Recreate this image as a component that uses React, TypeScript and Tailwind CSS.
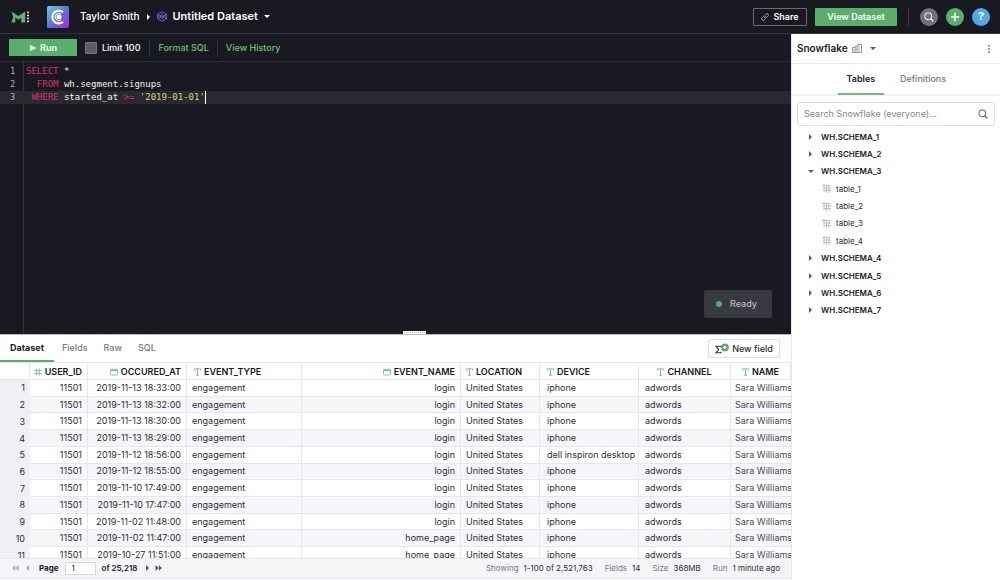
import { useState } from "react";
import type { ReactNode } from "react";
import clsx from "clsx";

const ROWS = [
  ["2019-11-13 18:33:00", "login", "iphone"],
  ["2019-11-13 18:32:00", "login", "iphone"],
  ["2019-11-13 18:30:00", "login", "iphone"],
  ["2019-11-13 18:29:00", "login", "iphone"],
  ["2019-11-12 18:56:00", "login", "dell inspiron desktop"],
  ["2019-11-12 18:55:00", "login", "iphone"],
  ["2019-11-10 17:49:00", "login", "iphone"],
  ["2019-11-10 17:47:00", "login", "iphone"],
  ["2019-11-02 11:48:00", "login", "iphone"],
  ["2019-11-02 11:47:00", "home_page", "iphone"],
  ["2019-10-27 11:51:00", "home_page", "iphone"],
];

type FieldType = "number" | "date" | "text";

const COLUMNS: { name: string; type: FieldType; align: string; width: string }[] = [
  { name: "USER_ID", type: "number", align: "justify-end pr-[5px]", width: "w-[58px]" },
  { name: "OCCURED_AT", type: "date", align: "justify-end pr-[5px]", width: "w-[99px]" },
  { name: "EVENT_TYPE", type: "text", align: "justify-start pl-[7px]", width: "w-[115px]" },
  { name: "EVENT_NAME", type: "date", align: "justify-end pr-[5px]", width: "w-[159px]" },
  { name: "LOCATION", type: "text", align: "justify-start pl-[5px]", width: "w-[79px]" },
  { name: "DEVICE", type: "text", align: "justify-start pl-[7px]", width: "w-[99px]" },
  { name: "CHANNEL", type: "text", align: "justify-center", width: "w-[92px]" },
  { name: "NAME", type: "text", align: "justify-center", width: "w-auto" },
];

const SCHEMAS = [1, 2, 3, 4, 5, 6, 7];
const TABLES = ["table_1", "table_2", "table_3", "table_4"];

/* ---------- icons ---------- */

function ModeLogo() {
  return (
    <svg width="20" height="12" viewBox="0 0 20 12" aria-hidden="true">
      <path d="M0.5 0.5 7.3 5 14.2 0.5V11.5H10.2V6.6L7.3 8.8 4.3 6.6V11.5H0.3L2.2 6z" fill="#5cb671" />
      <g fill="#d9d9de">
        <rect x="16" y="0.6" width="2" height="1.6" />
        <rect x="16" y="3.6" width="2" height="1.6" />
        <rect x="16" y="6.6" width="2" height="1.6" />
        <rect x="16" y="9.6" width="2" height="1.6" />
      </g>
    </svg>
  );
}

function WorkspaceLogo() {
  return (
    <svg width="22" height="22" viewBox="0 0 22 22" aria-hidden="true">
      <defs>
        <linearGradient id="workspace" x1="0" y1="0" x2="1" y2="1">
          <stop offset="0" stopColor="#5fd0e0" />
          <stop offset="0.5" stopColor="#6470dd" />
          <stop offset="1" stopColor="#a02bd0" />
        </linearGradient>
      </defs>
      <rect width="22" height="22" rx="1.5" fill="url(#workspace)" />
      <path d="M16 6.2A6.4 6.4 0 1 0 16 15.8" fill="none" stroke="#fff" strokeWidth="2.1" />
      <path d="M14 8.2A3.6 3.6 0 1 0 14 13.8" fill="none" stroke="#fff" strokeWidth="1" />
      <circle cx="12" cy="11" r="2.5" fill="#fff" />
    </svg>
  );
}

function DatasetIcon() {
  return (
    <svg width="10" height="11" viewBox="0 0 10 11" fill="none" stroke="#7c6fd6" aria-hidden="true">
      <path d="M5 0.8 9.3 3.1V7.9L5 10.2 0.7 7.9V3.1z" strokeWidth="0.9" />
      <path d="M0.7 3.4 5 6 9.3 3.4M0.7 7.6 5 5 9.3 7.6" strokeWidth="0.8" />
      <path d="M5 3.2 7.4 5.5 5 7.8 2.6 5.5z" strokeWidth="0.8" />
    </svg>
  );
}

function Triangle({ dir, className }: { dir: "right" | "left" | "down"; className?: string }) {
  const d = { right: "M1 0 4 3 1 6z", left: "M4 0 1 3 4 6z", down: "M0 1 6 1 3 4z" }[dir];
  const down = dir === "down";
  return (
    <svg
      width={down ? 6 : 5}
      height={down ? 5 : 6}
      viewBox={down ? "0 0 6 5" : "0 0 5 6"}
      className={clsx("shrink-0", className)}
      fill="currentColor"
      aria-hidden="true"
    >
      <path d={d} />
    </svg>
  );
}

function DoubleTriangle({ dir }: { dir: "right" | "left" }) {
  return (
    <svg width="7" height="6" viewBox="0 0 7 6" fill="currentColor" aria-hidden="true">
      <path d={dir === "right" ? "M0.5 0 3.5 3 0.5 6zM3.8 0 6.8 3 3.8 6z" : "M3.2 0 0.2 3 3.2 6zM6.5 0 3.5 3 6.5 6z"} />
    </svg>
  );
}

function LinkIcon() {
  return (
    <svg width="8" height="8" viewBox="0 0 8 8" fill="none" stroke="#b4b4bb" strokeWidth="0.8" strokeLinecap="round" aria-hidden="true">
      <path d="M3.4 4.6a1.5 1.5 0 0 0 2.1 0L7.1 3A1.5 1.5 0 0 0 5 .9L4 1.9" />
      <path d="M4.6 3.4a1.5 1.5 0 0 0-2.1 0L.9 5A1.5 1.5 0 0 0 3 7.1l1-1" />
    </svg>
  );
}

function SearchIcon({ className }: { className?: string }) {
  return (
    <svg width="10" height="10" viewBox="0 0 10 10" fill="none" stroke="currentColor" className={className} aria-hidden="true">
      <circle cx="4.3" cy="4.3" r="3.5" />
      <path d="M6.8 6.8 9.4 9.4" strokeWidth="1.3" />
    </svg>
  );
}

function BuildingIcon() {
  return (
    <svg width="10" height="9" viewBox="0 0 10 9" fill="none" stroke="#7d7d85" strokeWidth="0.8" aria-hidden="true">
      <path d="M0.5 8.5V3.5H3.2V8.5M3.2 3.5V2H5.8M5.8 8.5V0.5H9.5V8.5M0.5 8.5H9.5" />
      <path d="M7.6 2V7.4M4.5 3.6V7.4M1.9 5V7.4" strokeDasharray="0.9 0.7" />
    </svg>
  );
}

function TableIcon() {
  return (
    <svg width="9" height="9" viewBox="0 0 9 9" fill="none" stroke="#a9a9b1" strokeWidth="0.7" aria-hidden="true">
      <path d="M0 1.5H8M1.5 4H9M1.5 6.5H9M2 0V8M4.5 1.5V9M7 1.5V9" />
    </svg>
  );
}

function FieldIcon({ type }: { type: FieldType }) {
  if (type === "number") {
    return (
      <svg width="8" height="8" viewBox="0 0 8 8" fill="none" stroke="#74c386" strokeWidth="0.9" aria-hidden="true">
        <path d="M0.2 2.6H7.8M0.2 5.4H7.8M2.6 0.4V7.6M5.4 0.4V7.6" />
      </svg>
    );
  }
  if (type === "date") {
    return (
      <svg width="8" height="8" viewBox="0 0 8 8" fill="none" stroke="#6fb5d8" strokeWidth="0.8" aria-hidden="true">
        <rect x="0.5" y="1.7" width="7" height="5.4" rx="0.5" />
        <path d="M0.5 2.4H7.5" strokeWidth="1.2" />
        <path d="M2.2 0.4V2M5.8 0.4V2" />
      </svg>
    );
  }
  return (
    <svg width="7" height="8" viewBox="0 0 7 8" fill="none" stroke="#68b1dc" strokeWidth="0.9" aria-hidden="true">
      <path d="M0.5 2.6V0.9H6.5V2.6M3.5 0.9V7.2M2 7.2H5" />
    </svg>
  );
}

function NewFieldIcon() {
  return (
    <svg width="14" height="11" viewBox="0 0 14 11" aria-hidden="true">
      <path d="M6 4.2V3.2H0.9L3.7 6.5 0.9 9.8H6V8.8" fill="none" stroke="#33333b" strokeWidth="1.1" />
      <circle cx="9.9" cy="4.4" r="3.9" fill="#56af68" />
      <path d="M9.9 2.7V6.1M8.2 4.4H11.6" stroke="#fff" strokeWidth="1.3" />
    </svg>
  );
}

/* ---------- top bar ---------- */

function RoundButton({ label, className, children }: { label: string; className: string; children: ReactNode }) {
  return (
    <button aria-label={label} className={clsx("flex size-[18px] items-center justify-center rounded-full text-white", className)}>
      {children}
    </button>
  );
}

function TopBar() {
  return (
    <header className="flex h-[34px] shrink-0 items-center border-b border-[#33333c] px-[10px] text-white">
      <a href="#home" aria-label="Home" className="ml-[1px]"><ModeLogo /></a>
      <a href="#workspace" aria-label="Workspace" className="ml-4"><WorkspaceLogo /></a>
      <a href="#taylor" className="ml-[11px] text-[10px] font-medium">Taylor Smith</a>
      <Triangle dir="right" className="mx-[6px]" />
      <button className="flex items-center gap-[6px] text-[11px] font-semibold">
        <DatasetIcon />
        Untitled Dataset
        <Triangle dir="down" />
      </button>
      <div className="ml-auto flex items-center">
        <button className="flex h-[18px] w-[54px] items-center justify-center gap-1 rounded-[1px] border border-[#6b6b74] text-[9px] font-semibold">
          <LinkIcon />
          Share
        </button>
        <button className="ml-2 h-[18px] w-[82px] rounded-[1px] bg-[#58af6a] text-[9px] font-semibold">View Dataset</button>
        <div className="ml-[11px] h-[18px] w-px bg-[#3f3f48]" />
        <div className="ml-[11px] flex gap-2">
          <RoundButton label="Search" className="bg-[#71717c]"><SearchIcon /></RoundButton>
          <RoundButton label="Create" className="bg-[#58af6a]">
            <svg width="10" height="10" viewBox="0 0 10 10" stroke="currentColor" strokeWidth="1.5" aria-hidden="true">
              <path d="M5 0.8V9.2M0.8 5H9.2" />
            </svg>
          </RoundButton>
          <RoundButton label="Help" className="bg-[#4fa8e8] text-[11px] font-bold">?</RoundButton>
        </div>
      </div>
    </header>
  );
}

/* ---------- query editor ---------- */

function Toolbar() {
  return (
    <div className="flex h-7 shrink-0 items-center border-b border-[#2d2d36] pl-[9px] text-[9px] font-medium text-[#6cc07e]">
      <button className="flex h-[17px] w-[68px] items-center justify-center gap-[3px] bg-[#58af6a] font-semibold text-white">
        <svg width="8" height="6" viewBox="0 0 8 6" fill="currentColor" aria-hidden="true"><path d="M1 0 7.5 3 1 6z" /></svg>
        Run
      </button>
      <label className="ml-2 flex items-center gap-[5px] text-white">
        <input type="checkbox" className="size-3 appearance-none rounded-[1px] border border-[#76767f] bg-[#5d5d66] checked:bg-[#58af6a]" />
        Limit 100
      </label>
      <div className="ml-[9px] h-[18px] w-px bg-[#33333c]" />
      <button className="ml-2">Format SQL</button>
      <div className="ml-2 h-[18px] w-px bg-[#33333c]" />
      <button className="ml-2">View History</button>
    </div>
  );
}

function CodeLine({ n, active, children }: { n: number; active?: boolean; children: ReactNode }) {
  return (
    <div className={clsx("flex h-[13px] leading-[13px]", active && "bg-[#292931]")}>
      <span className="w-6 shrink-0 pr-[9px] text-right text-[8px] text-[#b6b6bd]">{n}</span>
      <code className="flex pl-[2px] font-['DejaVu_Sans_Mono',monospace]">{children}</code>
    </div>
  );
}

function Editor() {
  return (
    <div className="relative flex min-h-0 flex-1 flex-col">
      <div className="flex-1 bg-[linear-gradient(90deg,transparent_23px,#33333c_23px,#33333c_24px,transparent_24px)] pt-[3px] font-['DejaVu_Sans_Mono',monospace] text-[9px] text-[#f4f4f0]">
        <CodeLine n={1}>
          <span className="whitespace-pre"><span className="text-[#d9306f]">SELECT</span> *</span>
        </CodeLine>
        <CodeLine n={2}>
          <span className="whitespace-pre">{"  "}<span className="text-[#d9306f]">FROM</span> wh.segment.signups</span>
        </CodeLine>
        <CodeLine n={3} active>
          <span className="whitespace-pre">
            {" "}<span className="text-[#d9306f]">WHERE</span> started_at <span className="text-[#d9306f]">{">="}</span>{" "}
            <span className="text-[#dcd374]">'2019-01-01'</span>
          </span>
          <span className="h-[13px] w-px bg-white" />
        </CodeLine>
      </div>
      <div role="status" className="absolute right-[19px] bottom-4 flex h-7 w-[68px] items-center gap-2 rounded-[2px] bg-[#393942] pl-3 text-[9px] font-medium text-[#b9b9c0]">
        <span className="size-[6px] rounded-full bg-[#58af6a]" />
        Ready
      </div>
      <div className="absolute bottom-0 left-[403px] h-[3px] w-[23px] bg-white px-px pt-px">
        <div className="h-px bg-[repeating-linear-gradient(90deg,#b5b5bd_0px,#b5b5bd_1px,#ffffff_1px,#ffffff_2px)]" />
      </div>
    </div>
  );
}

/* ---------- results ---------- */

const TABS = ["Dataset", "Fields", "Raw", "SQL"];

function ResultTabs() {
  const [tab, setTab] = useState("Dataset");
  return (
    <div className="flex h-7 shrink-0 items-center border-b border-[#e6e6ec] pr-[11px]">
      <div role="tablist" className="flex h-full">
        {TABS.map((t) => (
          <button
            key={t}
            role="tab"
            aria-selected={tab === t}
            onClick={() => setTab(t)}
            className={clsx(
              "border-b-2 text-[9px]",
              t === "Dataset" ? "w-[54px]" : "px-2",
              tab === t ? "border-[#58af6a] font-bold text-[#202028]" : "border-transparent font-medium text-[#777781]",
            )}
          >
            {t}
          </button>
        ))}
      </div>
      <button className="ml-auto flex h-[19px] w-[72px] items-center justify-center gap-[3px] rounded-[2px] border border-[#dcdce2] text-[9px] font-medium text-[#2b2b33]">
        <NewFieldIcon />
        New field
      </button>
    </div>
  );
}

function Cell({ className = "px-[5px]", children }: { className?: string; children: ReactNode }) {
  return <td className={clsx("border-r border-b border-[#e6e6ee] p-0 whitespace-nowrap", className)}>{children}</td>;
}

function ResultTable() {
  return (
    <div className="min-h-0 flex-1 overflow-hidden">
      <table className="h-[201px] w-full table-fixed border-separate border-spacing-0 text-[9px] leading-[14px] text-[#2c2c33]">
        <thead>
          <tr className="h-[17px]">
            <th aria-label="Row" className="w-[30px] border-r border-b border-[#e6e6ee] p-0" />
            {COLUMNS.map((c) => (
              <th key={c.name} scope="col" className={clsx("border-r border-b border-[#e6e6ee] p-0 font-semibold text-[#17171c]", c.width)}>
                <div className={clsx("flex items-center gap-[3px] pt-px", c.align)}>
                  <FieldIcon type={c.type} />
                  {c.name}
                </div>
              </th>
            ))}
          </tr>
        </thead>
        <tbody>
          {ROWS.map(([at, event, device], i) => (
            <tr key={at} className="even:bg-[#f6f6f8]">
              <th scope="row" className="bg-[#eff0f4] p-0 pr-[5px] text-right font-normal">{i + 1}</th>
              <Cell className="pr-[5px] text-right">11501</Cell>
              <Cell className="pr-[5px] text-right">{at}</Cell>
              <Cell>engagement</Cell>
              <Cell className="pr-[5px] text-right">{event}</Cell>
              <Cell>United States</Cell>
              <Cell className="pl-[7px]">{device}</Cell>
              <Cell className="pl-[6px]">adwords</Cell>
              <td className="border-b border-[#e6e6ee] p-0 pl-1 whitespace-nowrap text-[#4a4a53]">Sara Williams</td>
            </tr>
          ))}
        </tbody>
      </table>
    </div>
  );
}

function Stat({ label, value }: { label: string; value: string }) {
  return (
    <span className="flex gap-[5px]">
      <span className="text-[#777781]">{label}</span>
      {value}
    </span>
  );
}

function ResultFooter() {
  return (
    <footer className="mb-px flex h-[21px] shrink-0 items-center border-y border-[#e6e6ee] bg-[#f5f5f8] pr-[11px] pb-px pl-3 text-[8px] text-[#2c2c33]">
      <div className="flex items-center text-[#54545e]">
        <button aria-label="First page" disabled className="text-[#a9a9b2]"><DoubleTriangle dir="left" /></button>
        <button aria-label="Previous page" disabled className="ml-[6px] text-[#a9a9b2]"><Triangle dir="left" /></button>
        <label className="ml-[9px] flex items-center gap-[6px] font-bold text-[#202028]">
          Page
          <input defaultValue="1" className="h-[13px] w-[31px] border border-[#d8d8e0] bg-white pl-[6px] font-normal" />
        </label>
        <span className="ml-[6px] font-semibold text-[#202028]">of 25,218</span>
        <button aria-label="Next page" className="ml-2"><Triangle dir="right" /></button>
        <button aria-label="Last page" className="ml-[5px]"><DoubleTriangle dir="right" /></button>
      </div>
      <div className="ml-auto flex gap-3">
        <Stat label="Showing" value="1-100 of 2,521,763" />
        <Stat label="Fields" value="14" />
        <Stat label="Size" value="368MB" />
        <Stat label="Run" value="1 minute ago" />
      </div>
    </footer>
  );
}

/* ---------- schema browser ---------- */

function SchemaBrowser() {
  const [open, setOpen] = useState(3);
  return (
    <aside className="flex w-[209px] shrink-0 flex-col border-l border-[#e6e6ee] bg-white text-[#202028]">
      <div className="flex h-[30px] items-center border-b border-[#e9e9ef] pr-[10px] pl-[5px]">
        <button className="flex items-center gap-1 text-[10px] font-semibold">
          Snowflake
          <BuildingIcon />
          <Triangle dir="down" className="ml-1 text-[#5b5b64]" />
        </button>
        <button aria-label="More" className="ml-auto text-[#6a6a73]">
          <svg width="2" height="8" viewBox="0 0 2 8" fill="currentColor" aria-hidden="true">
            <path d="M0.2 0H1.8V1.6H0.2zM0.2 3.2H1.8V4.8H0.2zM0.2 6.4H1.8V8H0.2z" />
          </svg>
        </button>
      </div>
      <div role="tablist" className="flex h-8 justify-center gap-1 border-b-2 border-[#f1f1f4] pl-1 text-[9px]">
        <button role="tab" aria-selected="true" className="-mb-px w-[46px] border-b-2 border-[#6fbb7f] font-semibold">Tables</button>
        <button role="tab" aria-selected="false" className="px-3 font-medium text-[#777781]">Definitions</button>
      </div>
      <label className="mx-[5px] mt-[6px] flex h-6 items-center rounded-[2px] border border-[#dcdce2] px-[6px] text-[#55555e]">
        <input aria-label="Search Snowflake" placeholder="Search Snowflake (everyone)..." className="min-w-0 flex-1 text-[9px] outline-none placeholder:text-[#85858f]" />
        <SearchIcon />
      </label>
      <ul className="mt-[2px] flex h-[191px] flex-col text-[8px]">
        {SCHEMAS.map((n) => (
          <li key={n} className={clsx("flex flex-col", open === n ? "flex-[5]" : "flex-1")}>
            <button
              aria-expanded={open === n}
              onClick={() => setOpen(open === n ? 0 : n)}
              className="flex flex-1 items-center pl-4 font-semibold"
            >
              <span className="w-[13px] text-[#5b5b64]"><Triangle dir={open === n ? "down" : "right"} /></span>
              WH.SCHEMA_{n}
            </button>
            {open === n &&
              TABLES.map((t) => (
                <a key={t} href={`#${t}`} className="flex flex-1 items-center gap-[5px] pl-[30px] text-[#2c2c33]">
                  <TableIcon />
                  {t}
                </a>
              ))}
          </li>
        ))}
      </ul>
    </aside>
  );
}

export default function App() {
  return (
    <div className="flex h-screen flex-col overflow-hidden bg-[#191921] font-[Inter,sans-serif]">
      <TopBar />
      <div className="flex min-h-0 flex-1">
        <main className="flex min-w-0 flex-1 flex-col">
          <Toolbar />
          <Editor />
          <section className="flex h-[246px] shrink-0 flex-col overflow-hidden border-t border-[#b9b9c1] bg-white">
            <ResultTabs />
            <ResultTable />
            <ResultFooter />
          </section>
        </main>
        <SchemaBrowser />
      </div>
    </div>
  );
}
